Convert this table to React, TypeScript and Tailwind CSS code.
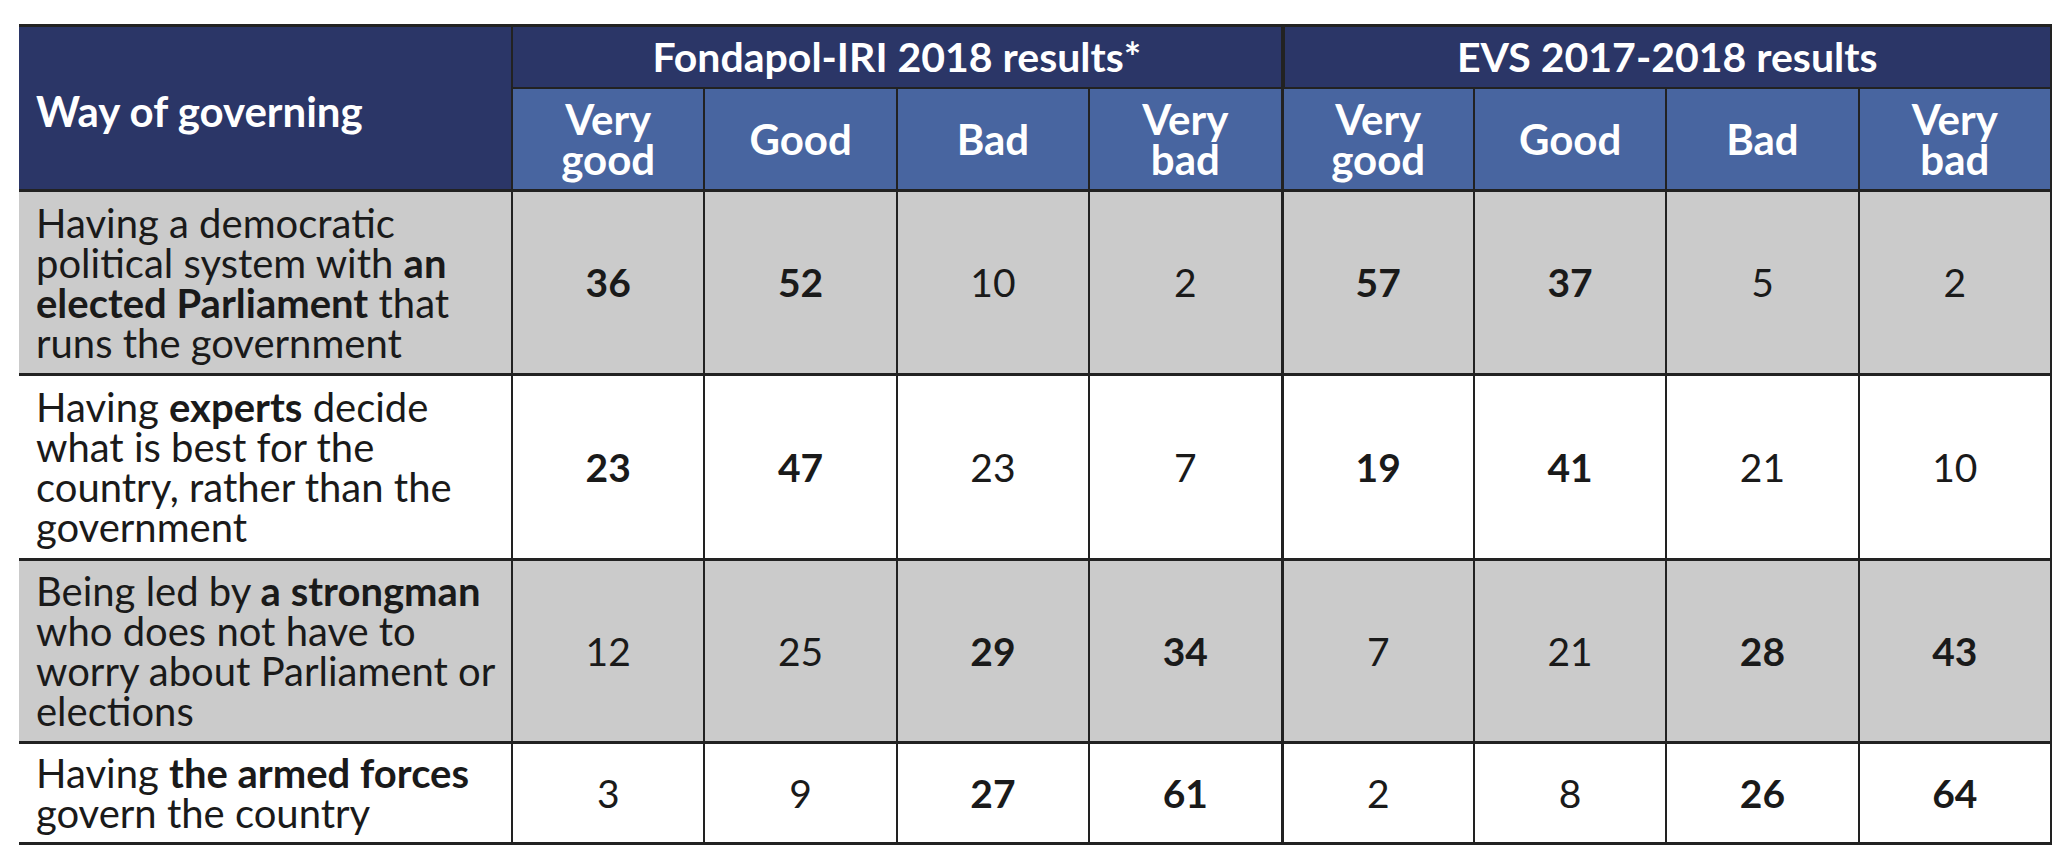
import React from "react";

type Row = {
  label: React.ReactNode;
  values: number[];
  bold: boolean[];
  grey: boolean;
  height: string;
};

const B = (a: number) => a === 1;

const rows: Row[] = [
  {
    label: (
      <>
        Having a democratic
        <br />
        political system with <b className="font-bold">an</b>
        <br />
        <b className="font-bold">elected Parliament</b> that
        <br />
        runs the government
      </>
    ),
    values: [36, 52, 10, 2, 57, 37, 5, 2],
    bold: [1, 1, 0, 0, 1, 1, 0, 0].map(B),
    grey: true,
    height: "h-[184px]",
  },
  {
    label: (
      <>
        Having <b className="font-bold">experts</b> decide
        <br />
        what is best for the
        <br />
        country, rather than the
        <br />
        government
      </>
    ),
    values: [23, 47, 23, 7, 19, 41, 21, 10],
    bold: [1, 1, 0, 0, 1, 1, 0, 0].map(B),
    grey: false,
    height: "h-[185px]",
  },
  {
    label: (
      <>
        Being led by <b className="font-bold">a strongman</b>
        <br />
        who does not have to
        <br />
        worry about Parliament or
        <br />
        elections
      </>
    ),
    values: [12, 25, 29, 34, 7, 21, 28, 43],
    bold: [0, 0, 1, 1, 0, 0, 1, 1].map(B),
    grey: true,
    height: "h-[183px]",
  },
  {
    label: (
      <>
        Having <b className="font-bold">the armed forces</b>
        <br />
        govern the country
      </>
    ),
    values: [3, 9, 27, 61, 2, 8, 26, 64],
    bold: [0, 0, 1, 1, 0, 0, 1, 1].map(B),
    grey: false,
    height: "h-[101px]",
  },
];

const subHeads: React.ReactNode[] = [
  <>
    Very
    <br />
    good
  </>,
  "Good",
  "Bad",
  <>
    Very
    <br />
    bad
  </>,
];

export default function App() {
  return (
    <div className="min-h-[860px] w-[2066px] bg-white pt-[24px] pl-[19px] font-[Lato,sans-serif]">
      <div className="w-[2033px] border-t-[3px] border-r-2 border-[#222]">
        {/* header */}
        <div className="grid grid-cols-[492px_repeat(8,minmax(0,1fr))] grid-rows-[62px_100px] border-b-[3px] border-[#222] text-white">
          <div className="row-span-2 flex items-center bg-[#2b3667] pl-[17px] pt-[6px] text-[42px] font-bold">
            Way of governing
          </div>
          <div className="col-span-4 flex items-center justify-center border-b-2 border-l-2 border-[#222] bg-[#2b3667] text-[41px] leading-[48px] font-bold">
            Fondapol-IRI 2018 results*
          </div>
          <div className="col-span-4 flex items-center justify-center border-b-2 border-l-4 border-[#222] bg-[#2b3667] text-[41px] leading-[48px] font-bold">
            EVS 2017-2018 results
          </div>
          {[0, 1].map((g) =>
            subHeads.map((h, i) => (
              <div
                key={`${g}-${i}`}
                className={`flex items-center justify-center bg-[#4865a0] text-center text-[42px] leading-[40px] font-bold ${
                  g === 1 && i === 0 ? "border-l-[3px]" : "border-l-2"
                } border-[#222]`}
              >
                <span>{h}</span>
              </div>
            ))
          )}
        </div>

        {/* body */}
        {rows.map((r, ri) => (
          <div
            key={ri}
            className={`grid grid-cols-[492px_repeat(8,minmax(0,1fr))] border-b-[3px] border-[#222] text-[#1a1a1a] ${r.height} ${
              r.grey ? "bg-[#cbcbcb]" : "bg-white"
            }`}
          >
            <div className="flex items-center pl-[17px] text-[40px] leading-[40px]">
              <p>{r.label}</p>
            </div>
            {r.values.map((v, i) => (
              <div
                key={i}
                className={`flex items-center justify-center text-[39px] ${
                  r.bold[i] ? "font-bold" : "font-normal"
                } ${i === 4 ? "border-l-[3px]" : "border-l-2"} border-[#222]`}
              >
                {v}
              </div>
            ))}
          </div>
        ))}
      </div>
    </div>
  );
}
